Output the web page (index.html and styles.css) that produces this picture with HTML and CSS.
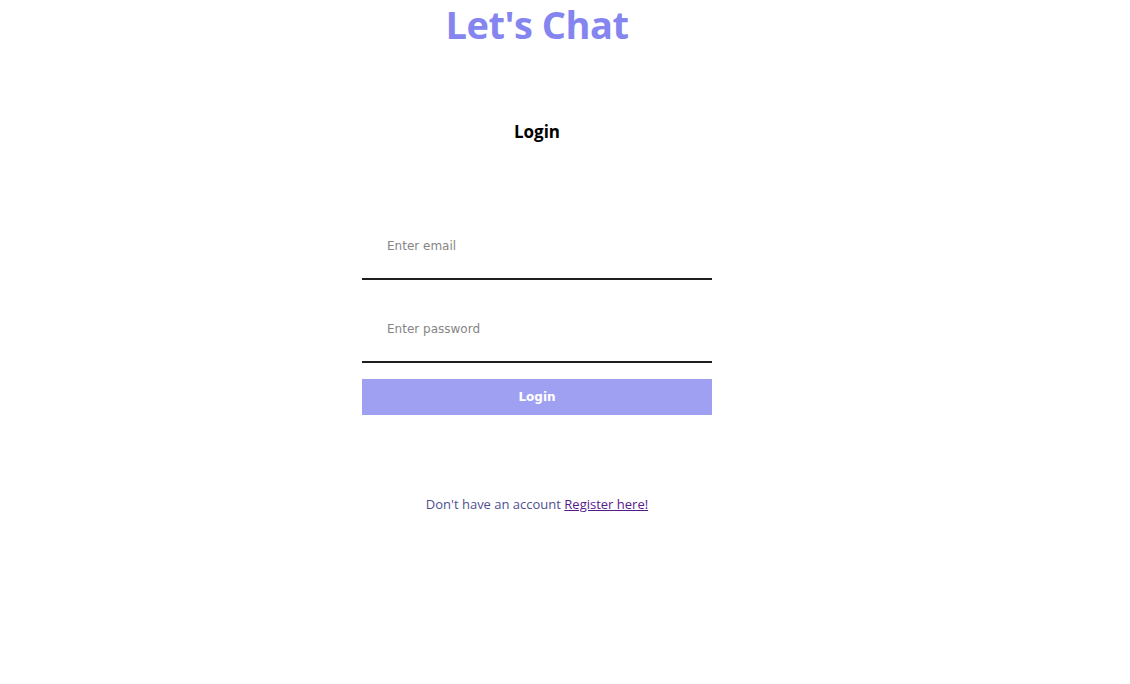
FILE: index.html
```html
<!DOCTYPE html>
<html>
<head>
<meta charset="utf-8">
<link rel="stylesheet" href="styles.css">
</head>
<body>
<main class="page">
  <h1 class="title">Let's Chat</h1>
  <h2 class="subtitle">Login</h2>
  <form class="form">
    <input class="field" type="email" placeholder="Enter email">
    <input class="field" type="password" placeholder="Enter password">
    <button class="btn" type="button">Login</button>
  </form>
  <p class="footer">Don't have an account <a class="link" href="#">Register here!</a></p>
</main>
</body>
</html>
```

FILE: styles.css
```css
html, body {
  margin: 0;
  padding: 0;
  background: #fff;
}
.page {
  width: 1074px;
  display: flex;
  flex-direction: column;
  align-items: center;
  font-family: "Open Sans", "Noto Sans", sans-serif;
}
.title {
  margin: 0;
  padding-top: 0;
  font-size: 38px;
  line-height: 48px;
  font-weight: 700;
  color: #8585f0;
  letter-spacing: -0.5px;
}
.subtitle {
  margin: 72px 0 0;
  font-size: 17px;
  line-height: 24px;
  font-weight: 700;
  color: #000;
}
.form {
  margin-top: 69px;
  width: 350px;
  display: flex;
  flex-direction: column;
  gap: 16px;
}
.field {
  box-sizing: border-box;
  height: 67px;
  width: 100%;
  border: none;
  border-bottom: 2px solid #1e1e1e;
  padding: 0 25px;
  font-family: "DejaVu Sans", sans-serif;
  font-size: 12px;
  outline: none;
  background: #fff;
}
.field::placeholder {
  color: #858585;
}
.btn {
  height: 36px;
  border: none;
  background: #a0a0f2;
  color: #fff;
  font-family: "DejaVu Sans", sans-serif;
  font-weight: 700;
  font-size: 12px;
}
.footer {
  margin: 80px 0 0;
  font-size: 13px;
  line-height: 18px;
  color: #4f4f8f;
}
.link {
  color: #551a8b;
  text-decoration: underline;
}
```
